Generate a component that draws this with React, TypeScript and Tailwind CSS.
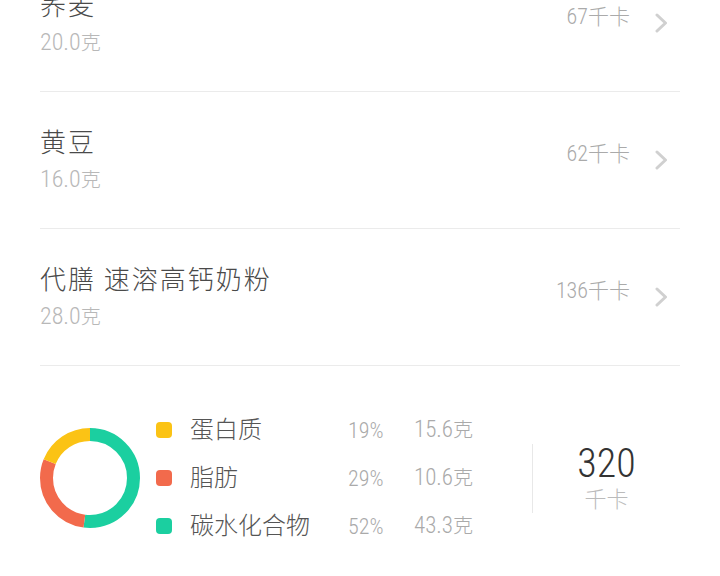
import React from "react";

const R = 43.5;
const C = 2 * Math.PI * R;

function Chevron() {
  return (
    <svg width="14" height="20" viewBox="0 0 14 20" className="ml-6 shrink-0">
      <path
        d="M3 2 L11.5 10 L3 18"
        fill="none"
        stroke="#d0d0d0"
        strokeWidth="3"
        strokeLinecap="round"
        strokeLinejoin="round"
      />
    </svg>
  );
}

function Donut() {
  const segs = [
    { color: "#1bcfa0", start: 0, len: 0.52 },
    { color: "#f26a4c", start: 0.52, len: 0.29 },
    { color: "#fbc315", start: 0.81, len: 0.19 },
  ];
  return (
    <svg width="100" height="100" viewBox="0 0 100 100" className="shrink-0">
      {segs.map((s) => (
        <circle
          key={s.color}
          cx="50"
          cy="50"
          r={R}
          fill="none"
          stroke={s.color}
          strokeWidth="13"
          strokeDasharray={`${s.len * C} ${C}`}
          strokeDashoffset={-s.start * C}
          transform="rotate(-90 50 50)"
        />
      ))}
    </svg>
  );
}

type Food = { name: string; grams: string; kcal: string };

function FoodRow({ food, first }: { food: Food; first?: boolean }) {
  return (
    <div
      className={
        first
          ? "-mt-[45px] flex h-[137px] items-center border-b border-[#ebebeb] pr-3"
          : "flex h-[137px] items-center border-b border-[#ebebeb] pr-3"
      }
    >
      <div className="flex flex-col">
        <div className="text-[26px] leading-[36px] tracking-[2px] text-[#4a4a4a]">{food.name}</div>
        <div className="mt-1 leading-[28px] text-[#b8b8b8]">
          <span className="text-[24px]">{food.grams}</span>
          <span className="text-[20px]">克</span>
        </div>
      </div>
      <div className="mb-[10px] ml-auto leading-[28px] text-[#aaa]">
        <span className="text-[22px]">{food.kcal}</span>
        <span className="text-[21px]">千卡</span>
      </div>
      <Chevron />
    </div>
  );
}

const foods: Food[] = [
  { name: "荞麦", grams: "20.0", kcal: "67" },
  { name: "黄豆", grams: "16.0", kcal: "62" },
  { name: "代膳 速溶高钙奶粉", grams: "28.0", kcal: "136" },
];

export default function App() {
  return (
    <div className="h-[576px] w-[720px] overflow-hidden bg-white font-light font-stretch-condensed font-[family-name:'Roboto_Condensed',Roboto,'Noto_Sans_CJK_SC',sans-serif]">
      <div className="mx-10">
        {foods.map((f, i) => (
          <FoodRow key={f.name} food={f} first={i === 0} />
        ))}

        <div className="flex items-center pt-[40px]">
          <Donut />
          <div className="ml-4 flex flex-col">
            <div className="flex h-12 items-center">
              <span className="h-4 w-4 shrink-0 rounded-[4px] bg-[#fbc315]" />
              <span className="ml-[18px] w-[158px] text-[24px] text-[#555]">蛋白质</span>
              <span className="w-[66px] text-[22px] text-[#aaa]">19%</span>
              <span className="w-[118px] text-[#aaa]">
                <span className="text-[23px]">15.6</span>
                <span className="text-[20px]">克</span>
              </span>
            </div>
            <div className="flex h-12 items-center">
              <span className="h-4 w-4 shrink-0 rounded-[4px] bg-[#f26a4c]" />
              <span className="ml-[18px] w-[158px] text-[24px] text-[#555]">脂肪</span>
              <span className="w-[66px] text-[22px] text-[#aaa]">29%</span>
              <span className="w-[118px] text-[#aaa]">
                <span className="text-[23px]">10.6</span>
                <span className="text-[20px]">克</span>
              </span>
            </div>
            <div className="flex h-12 items-center">
              <span className="h-4 w-4 shrink-0 rounded-[4px] bg-[#1bcfa0]" />
              <span className="ml-[18px] w-[158px] text-[24px] text-[#555]">碳水化合物</span>
              <span className="w-[66px] text-[22px] text-[#aaa]">52%</span>
              <span className="w-[118px] text-[#aaa]">
                <span className="text-[23px]">43.3</span>
                <span className="text-[20px]">克</span>
              </span>
            </div>
          </div>
          <div className="h-[69px] w-px shrink-0 bg-[#e8e8e8]" />
          <div className="flex flex-1 flex-col items-center">
            <div className="text-[40px] leading-[44px] text-[#333]">320</div>
            <div className="text-[22px] leading-[28px] text-[#bbb]">千卡</div>
          </div>
        </div>
      </div>
    </div>
  );
}
